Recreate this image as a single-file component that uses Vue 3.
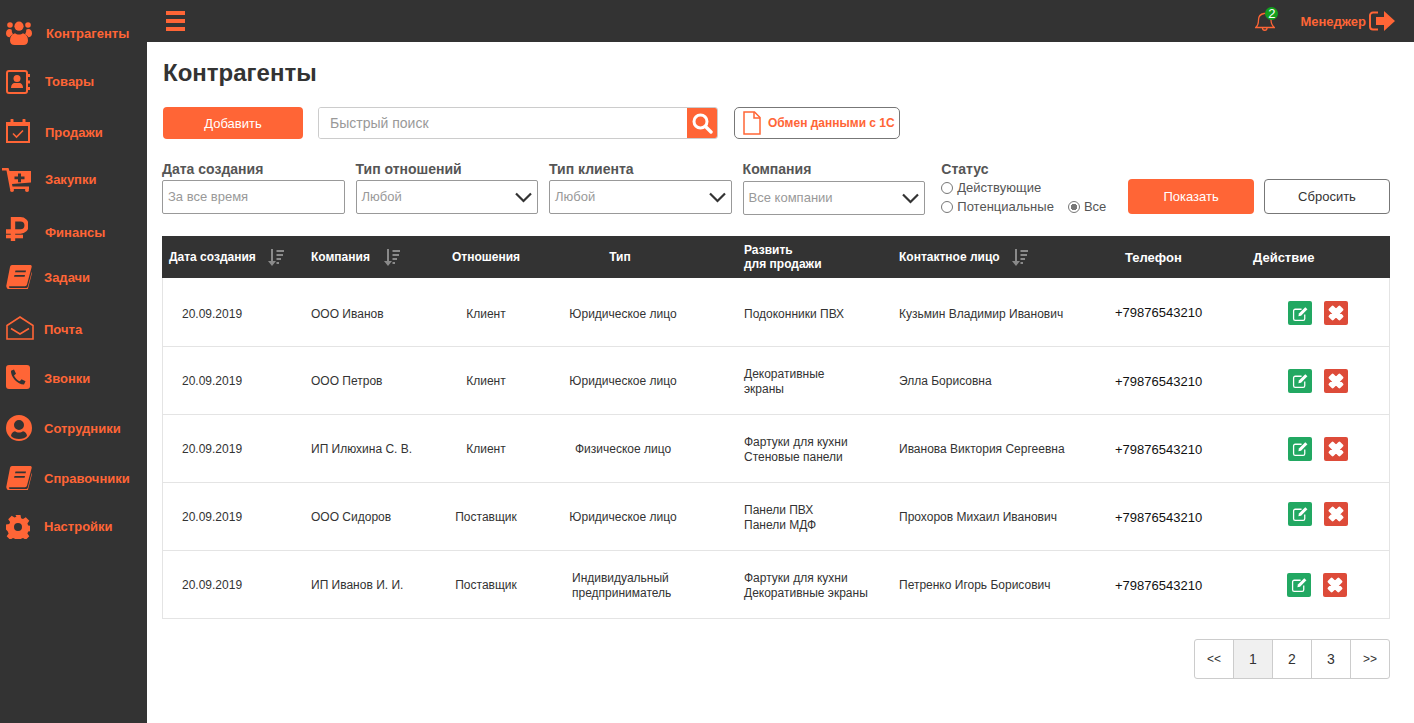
<template>
  <div class="page">
    <aside class="sidebar">
      <a v-for="item in menu" :key="item.title" class="navItem" :style="{ marginTop: item.gap + 'px' }">
        <span class="navIcon" :style="{ marginTop: item.dy * 2 + 'px' }">
          <svg v-if="item.icon === 'users'" width="26" height="24" viewBox="0 0 26 24" fill="currentColor">
            <circle cx="4" cy="4" r="2.8" /><circle cx="22" cy="4" r="2.8" /><circle cx="13" cy="5.2" r="4.6" />
            <path d="M0 12.500C0 9.500 1.500 8 3.500 8c1 0 1.800.3 2.300.8-.3 1.900.5 3.500 1.500 4.500-1.700.6-2.900 1.600-3.500 3C1.500 16 0 15 0 12.500ZM26 12.500C26 9.500 24.500 8 22.500 8c-1 0-1.800.3-2.300.8.3 1.900-.5 3.500-1.500 4.500 1.700.6 2.900 1.600 3.500 3 2.300-.3 3.800-1.300 3.800-3.800Z" />
            <path d="M4 19.500C4 15.500 6 13 9 12.200c1 .9 2.500 1.400 4 1.400s3-.5 4-1.400c3 .8 5 3.300 5 7.300 0 3-2 4.500-4.500 4.500h-9C6 24 4 22.500 4 19.500Z" />
          </svg>
          <svg v-else-if="item.icon === 'contact'" width="24" height="24" viewBox="0 0 24 24" fill="currentColor">
            <rect x="1" y="1" width="20" height="22" rx="2" fill="none" stroke="currentColor" stroke-width="2" />
            <circle cx="11" cy="8.500" r="3.500" /><path d="M5 18c0-3.500 2-5 3.500-5h5c1.500 0 3.500 1.500 3.500 5Z" />
            <rect x="21.500" y="4" width="2.500" height="3" /><rect x="21.500" y="10.500" width="2.500" height="3" /><rect x="21.500" y="17" width="2.500" height="3" />
          </svg>
          <svg v-else-if="item.icon === 'calendar'" width="24" height="24" viewBox="0 0 24 24" fill="none" stroke="currentColor">
            <path d="M1 6h22v17H1Z" stroke-width="2" />
            <path d="M0 3h24v3.500H0Z" fill="currentColor" stroke="none" />
            <path d="M6 1v3M18 1v3" stroke-width="3" stroke-linecap="round" />
            <path d="M7 14.500l3.500 3.500 6.500-6.500" stroke-width="1.600" />
          </svg>
          <svg v-else-if="item.icon === 'cart'" class="cartIcon" width="29" height="24" viewBox="0 0 29 24" fill="currentColor">
            <path d="M0 0h6.500l1 3H29v11.500l-19 1.500.5 2.500H27V21H8L4.500 2.500H0Z" />
            <circle cx="10" cy="22" r="2" /><circle cx="25" cy="22" r="2" />
            <path d="M16 5.500h3v3h3.500v2.800H19v3h-3v-3h-3.500V8.500H16Z" fill="#333" />
          </svg>
          <svg v-else-if="item.icon === 'ruble'" width="22" height="24" viewBox="0 0 22 24" fill="none" stroke="currentColor" stroke-width="4.400">
            <path d="M7 24V2.200h7.500a6 6 0 0 1 0 12.300H0" /><path d="M0 19.500h17" stroke-width="3.600" />
          </svg>
          <svg v-else-if="item.icon === 'book'" width="26" height="24" viewBox="0 0 26 24" fill="currentColor">
            <path d="M6 0h18c1.500 0 2 1 1.600 2.200L21 19.500c-.3 1.200-1 1.700-2 1.700H4c-1.500 0-1.500 1.800 0 1.800h16c.8 0 1.300-.3 1.700-1.100l4-15 .3 1-4 15.500c-.2.900-1 1.600-2 1.600H3.500C1 24 0 22 .4 20.300L4 2C4.300.8 5 0 6 0Z" />
            <path d="M9.500 5.500h10.500l-.4 1.800H9ZM8.500 10h10.500l-.4 1.800H8Z" fill="#333" />
          </svg>
          <svg v-else-if="item.icon === 'mail'" width="28" height="24" viewBox="0 0 28 24" fill="none" stroke="currentColor" stroke-width="1.600">
            <path d="M1 23V9.500L14 1l13 8.500V23Z" />
            <path d="M5 12.500l9 5.500 9-5.500" />
          </svg>
          <svg v-else-if="item.icon === 'phone'" width="24" height="24" viewBox="0 0 24 24" fill="currentColor">
            <path d="M3 0h18a3 3 0 0 1 3 3v18a3 3 0 0 1-3 3H3a3 3 0 0 1-3-3V3a3 3 0 0 1 3-3Z" />
            <path d="M8 4.500l-3 1.200c-.5 6 6.500 13.800 13 13.800l1.500-3.200-4-2-1.700 2C11.500 15.500 9 13 8 10.500l2-1.700Z" fill="#333" />
          </svg>
          <svg v-else-if="item.icon === 'user'" width="26" height="26" viewBox="0 0 26 26" fill="currentColor">
            <path fill-rule="evenodd" d="M13 0a13 13 0 1 1 0 26a13 13 0 0 1 0-26ZM13 5a5 5 0 1 0 0 10a5 5 0 0 0 0-10ZM5 21c1.500 2 4.500 3 8 3s6.500-1 8-3c-.3-3-2-4.500-4-4.800-1 .8-2.500 1.300-4 1.300s-3-.5-4-1.300c-2 .3-3.700 1.800-4 4.800Z" />
          </svg>
          <svg v-else-if="item.icon === 'gear'" width="24" height="24" viewBox="0 0 24 24" fill="currentColor">
            <path fill-rule="evenodd" d="M9.500 0h5l.6 3.300 1.900.8 2.800-1.900 3.500 3.500-1.900 2.800.8 1.900 3.300.6v5l-3.300.6-.8 1.900 1.900 2.800-3.500 3.500-2.800-1.900-1.900.8-.6 3.300h-5l-.6-3.300-1.900-.8-2.800 1.900-3.500-3.500 1.900-2.800-.8-1.900L0 14.500v-5l3.300-.6.8-1.900-1.900-2.800 3.500-3.500 2.800 1.900 1.900-.8ZM12 8a4 4 0 1 0 0 8a4 4 0 0 0 0-8Z" />
          </svg>
        </span>
        <span class="navText">{{ item.title }}</span>
      </a>
    </aside>

    <div class="main">
      <header class="topBar">
        <div class="burger"><i></i><i></i><i></i></div>
        <div class="bell">
          <svg width="20" height="21" viewBox="0 0 20 21" fill="none" stroke="currentColor" stroke-width="1.300">
            <path d="M.7 16.500c2.300-2 2.800-3.500 2.800-7.500 0-3.500 2.500-6 5.500-6.500s7 3 7 6.500c0 4 1 5.500 3.300 7.500Z" />
            <path d="M7.500 17c0 3 4.500 3 4.500 0" />
          </svg>
          <span class="badge">2</span>
        </div>
        <span class="manager">Менеджер</span>
        <svg class="exitIcon" width="26" height="20" viewBox="0 0 26 20" fill="currentColor">
          <path d="M9 1.500H4A3 3 0 0 0 1 4.500v11a3 3 0 0 0 3 3h5" fill="none" stroke="currentColor" stroke-width="2" />
          <path d="M7 6h8V0l11 10-11 10v-6H7Z" />
        </svg>
      </header>

      <div class="content">
        <h1>Контрагенты</h1>

        <div class="toolbar">
          <button class="btnOrange addBtn">Добавить</button>
          <div class="searchBox">
            <input type="text" placeholder="Быстрый поиск" />
            <span class="searchBtn">
              <svg width="22" height="22" viewBox="0 0 22 22" fill="none" stroke="#fff">
                <circle cx="9.500" cy="9.500" r="6.500" stroke-width="3" />
                <path d="M14.500 14.500l5.500 5.500" stroke-width="3.400" stroke-linecap="round" />
              </svg>
            </span>
          </div>
          <button class="exchangeBtn">
            <svg width="18" height="24" viewBox="0 0 18 24" fill="none" stroke="#ff6536" stroke-width="1.500">
              <path d="M1 1h10.500L17 6.500V23H1Z" /><path d="M11 1v6h6" />
            </svg>
            Обмен данными с 1С
          </button>
        </div>

        <div class="filters">
          <div class="field">
            <label>Дата создания</label>
            <div class="selectBox">За все время</div>
          </div>
          <div class="field">
            <label>Тип отношений</label>
            <div class="selectBox">Любой<svg class="chevron" viewBox="0 0 17 11"><path d="M1 1.500l7.500 7.500L16 1.500" /></svg></div>
          </div>
          <div class="field">
            <label>Тип клиента</label>
            <div class="selectBox">Любой<svg class="chevron" viewBox="0 0 17 11"><path d="M1 1.500l7.500 7.500L16 1.500" /></svg></div>
          </div>
          <div class="field">
            <label>Компания</label>
            <div class="selectBox company">Все компании<svg class="chevron" viewBox="0 0 17 11"><path d="M1 1.500l7.500 7.500L16 1.500" /></svg></div>
          </div>
          <div class="statusField">
            <label>Статус</label>
            <div class="radioLine"><span class="radio"></span>Действующие</div>
            <div class="radioLine"><span class="radio"></span>Потенциальные<span class="radio checked allRadio"></span>Все</div>
          </div>
          <button class="btnOrange showBtn">Показать</button>
          <button class="resetBtn">Сбросить</button>
        </div>

        <div class="tableWrap">
          <div class="row headRow">
            <div class="cDate">Дата создания<svg class="sortIcon" viewBox="0 0 16 17"><path d="M3 0h2v12h3l-4 5-4-5h3Z" /><path d="M8.500 1H16v2H8.500ZM8.500 5H15v2H8.500ZM8.500 9H13v2H8.500ZM8.500 13H11v2H8.500Z" /></svg></div>
            <div>Компания<svg class="sortIcon companySort" viewBox="0 0 16 17"><path d="M3 0h2v12h3l-4 5-4-5h3Z" /><path d="M8.500 1H16v2H8.500ZM8.500 5H15v2H8.500ZM8.500 9H13v2H8.500ZM8.500 13H11v2H8.500Z" /></svg></div>
            <div class="center">Отношения</div>
            <div class="center typeHead">Тип</div>
            <div>Развить<br />для продажи</div>
            <div>Контактное лицо<svg class="sortIcon" viewBox="0 0 16 17"><path d="M3 0h2v12h3l-4 5-4-5h3Z" /><path d="M8.500 1H16v2H8.500ZM8.500 5H15v2H8.500ZM8.500 9H13v2H8.500ZM8.500 13H11v2H8.500Z" /></svg></div>
            <div class="cPhoneHead">Телефон</div>
            <div class="cActionHead">Действие</div>
          </div>
          <div v-for="(r, i) in rows" :key="i" class="row bodyRow">
            <div class="bodyDate">{{ r.date }}</div>
            <div>{{ r.company }}</div>
            <div class="center">{{ r.relation }}</div>
            <div v-if="r.type2" class="cTypeLong">{{ r.type }}<br />{{ r.type2 }}</div>
            <div v-else class="center cType">{{ r.type }}</div>
            <div>{{ r.goods }}<template v-if="r.goods2"><br />{{ r.goods2 }}</template></div>
            <div>{{ r.person }}</div>
            <div class="cPhone">+79876543210</div>
            <div class="cActions">
              <span class="iconBtn green">
                <svg width="17" height="17" viewBox="0 0 16 16" fill="none" stroke="#fff" stroke-width="1.200">
                  <path d="M12 9v4a1.500 1.500 0 0 1-1.500 1.500h-7.500A1.500 1.500 0 0 1 1.500 13V5.500A1.500 1.500 0 0 1 3 4h6" />
                  <path d="M6 10.500l.5-2.500 6-6 2 2-6 6Z" fill="#fff" stroke="none" />
                </svg>
              </span>
              <span class="iconBtn red">
                <svg width="18" height="18" viewBox="0 0 16 16"><path d="M2.500 5L5 2.500l3 3 3-3L13.500 5l-3 3 3 3-2.500 2.500-3-3-3 3L2.500 11l3-3Z" fill="#fff" stroke="#fff" stroke-width="2.200" stroke-linejoin="round" /></svg>
              </span>
            </div>
          </div>
        </div>

        <div class="pagerLine">
          <div class="pager">
            <span class="arrows">&lt;&lt;</span><span class="active">1</span><span>2</span><span>3</span><span class="arrows">&gt;&gt;</span>
          </div>
        </div>
      </div>
    </div>
  </div>
</template>

<script setup>
const menu = [
  { title: 'Контрагенты', icon: 'users', gap: 0, dy: 0 },
  { title: 'Товары', icon: 'contact', gap: 8, dy: 1 },
  { title: 'Продажи', icon: 'calendar', gap: 11, dy: -1 },
  { title: 'Закупки', icon: 'cart', gap: 7, dy: 1 },
  { title: 'Финансы', icon: 'ruble', gap: 13, dy: -3 },
  { title: 'Задачи', icon: 'book', gap: 5, dy: 0 },
  { title: 'Почта', icon: 'mail', gap: 12, dy: -1 },
  { title: 'Звонки', icon: 'phone', gap: 9, dy: -1 },
  { title: 'Сотрудники', icon: 'user', gap: 10, dy: 0 },
  { title: 'Справочники', icon: 'book', gap: 10, dy: 0 },
  { title: 'Настройки', icon: 'gear', gap: 8, dy: 1 }
]

const rows = [
  { date: '20.09.2019', company: 'ООО Иванов', relation: 'Клиент', type: 'Юридическое лицо', goods: 'Подоконники ПВХ', person: 'Кузьмин Владимир Иванович' },
  { date: '20.09.2019', company: 'ООО Петров', relation: 'Клиент', type: 'Юридическое лицо', goods: 'Декоративные', goods2: 'экраны', person: 'Элла Борисовна' },
  { date: '20.09.2019', company: 'ИП Илюхина С. В.', relation: 'Клиент', type: 'Физическое лицо', goods: 'Фартуки для кухни', goods2: 'Стеновые панели', person: 'Иванова Виктория Сергеевна' },
  { date: '20.09.2019', company: 'ООО Сидоров', relation: 'Поставщик', type: 'Юридическое лицо', goods: 'Панели ПВХ', goods2: 'Панели МДФ', person: 'Прохоров Михаил Иванович' },
  { date: '20.09.2019', company: 'ИП Иванов И. И.', relation: 'Поставщик', type: 'Индивидуальный', type2: 'предприниматель', goods: 'Фартуки для кухни', goods2: 'Декоративные экраны', person: 'Петренко Игорь Борисович' }
]
</script>

<style>
html, body {
  margin: 0;
  background: #fff;
}
</style>

<style scoped>
.page {
  display: flex;
  min-height: 100vh;
  font-family: 'Liberation Sans', Arial, sans-serif;
  color: #333;
}

.sidebar {
  width: 147px;
  flex-shrink: 0;
  background: #333;
  padding-top: 13px;
  box-sizing: border-box;
}

.navItem {
  display: flex;
  align-items: center;
  height: 40px;
  color: #ff6536;
  font-size: 13px;
  font-weight: bold;
}

.navItem:first-child .navText {
  margin-left: 1px;
}

.navIcon {
  width: 45px;
  padding-left: 6px;
  box-sizing: border-box;
  flex-shrink: 0;
  display: flex;
}

.navItem:nth-child(n+6) .navIcon {
  width: 44px;
}

.cartIcon {
  margin-left: -4px;
}

.topBar {
  height: 42px;
  background: #333;
  display: flex;
  align-items: center;
  color: #ff6536;
  padding: 0 19px;
}

.burger {
  display: flex;
  flex-direction: column;
  gap: 4px;
  margin-right: auto;
}

.burger i {
  display: block;
  width: 19px;
  height: 4px;
  background: #ff6536;
}

.bell {
  position: relative;
  width: 20px;
  height: 21px;
  margin-right: 25px;
}

.badge {
  position: absolute;
  left: 10px;
  top: -4px;
  width: 13px;
  height: 13px;
  border-radius: 50%;
  background: #14a01e;
  color: #fff;
  font-size: 13px;
  line-height: 13px;
  text-align: center;
}

.manager {
  font-size: 13px;
  font-weight: bold;
  margin-right: 3px;
}

.main {
  flex: 1;
  min-width: 0;
}

.content {
  padding: 0 24px 0 15px;
}

h1 {
  font-size: 24px;
  font-weight: bold;
  line-height: 28px;
  margin: 17px 0 20px 1px;
  color: #333;
}

.toolbar {
  display: flex;
  align-items: center;
  margin-left: 1px;
}

.btnOrange {
  border: none;
  background: #ff6536;
  color: #fff;
  border-radius: 4px;
  font-family: inherit;
  font-size: 13px;
}

.addBtn {
  width: 140px;
  height: 32px;
}

.searchBox {
  display: flex;
  width: 400px;
  height: 32px;
  margin-left: 15px;
  border: 1px solid #ccc;
  border-radius: 3px;
  box-sizing: border-box;
  overflow: hidden;
}

.searchBox input {
  flex: 1;
  min-width: 0;
  border: none;
  outline: none;
  padding: 0 11px;
  font-family: inherit;
  font-size: 14px;
}

.searchBox input::placeholder {
  color: #999;
}

.searchBtn {
  width: 30px;
  background: #ff6536;
  display: flex;
  align-items: center;
  justify-content: center;
}

.exchangeBtn {
  display: flex;
  align-items: center;
  gap: 7px;
  width: 166px;
  height: 32px;
  margin-left: 16px;
  padding: 0 0 0 8px;
  background: #fff;
  border: 1px solid #777;
  border-radius: 5px;
  box-sizing: border-box;
  color: #ff6536;
  font-family: inherit;
  font-size: 12px;
  font-weight: bold;
  white-space: nowrap;
}

.filters {
  display: flex;
  align-items: flex-end;
  margin-top: 19px;
}

.field {
  width: 183px;
  margin-right: 10.7px;
}

.field label {
  display: block;
  font-size: 14px;
  font-weight: bold;
  color: #555;
  line-height: 22px;
}

.statusField label {
  display: block;
  font-size: 14px;
  font-weight: bold;
  color: #555;
  line-height: 18px;
}

.selectBox {
  position: relative;
  height: 34px;
  border: 1px solid #999;
  border-radius: 2px;
  box-sizing: border-box;
  padding-left: 5px;
  line-height: 32px;
  font-size: 13px;
  color: #999;
}

.selectBox.company {
  margin-top: 1px;
  margin-bottom: -1px;
}

.chevron {
  position: absolute;
  right: 5px;
  top: 11px;
  width: 17px;
  height: 11px;
  fill: none;
  stroke: #333;
  stroke-width: 2.200;
}

.statusField {
  width: 187px;
  margin-left: 5.2px;
  margin-bottom: -2px;
  font-size: 13px;
  color: #555;
}

.radioLine {
  display: flex;
  align-items: center;
  height: 19px;
}

.radio {
  width: 12px;
  height: 12px;
  border: 1px solid #777;
  border-radius: 50%;
  box-sizing: border-box;
  margin-right: 4px;
  background: #fff;
  flex-shrink: 0;
}

.radio.checked {
  background: radial-gradient(circle, #777 0 3px, #fff 3.500px);
}

.allRadio {
  margin-left: 14px;
}

.showBtn,
.resetBtn {
  width: 126px;
  height: 35px;
  font-size: 13px;
  border-radius: 4px;
}

.resetBtn {
  margin-left: 10px;
  background: #fff;
  border: 1px solid #777;
  color: #333;
  font-family: inherit;
}

.tableWrap {
  margin-top: 22px;
}

.row {
  display: grid;
  grid-template-columns: 149px 120px 110px 203px 155px 216px 125px 150px;
  align-items: center;
  box-sizing: border-box;
}

.headRow {
  height: 42px;
  background: #333;
  color: #fff;
  font-size: 12px;
  font-weight: bold;
}

.bodyRow {
  height: 68px;
  padding-top: 2px;
  grid-template-columns: 148px 120px 110px 203px 155px 216px 125px 150px;
  border: 1px solid #e4e4e4;
  border-top: none;
  font-size: 12px;
  color: #333;
  line-height: 15px;
}

.bodyRow:nth-child(2) {
  height: 69px;
  padding-top: 4px;
}

.cDate {
  padding-left: 7px;
}

.bodyDate {
  padding-left: 19px;
}

.center {
  text-align: center;
}

.cType {
  padding-right: 39px;
}

.typeHead {
  padding-right: 45px;
}

.cTypeLong {
  padding-left: 31px;
}

.sortIcon {
  width: 16px;
  height: 17px;
  fill: #8a8a8a;
  margin-left: 12px;
  vertical-align: middle;
}

.companySort {
  margin-left: 14px;
}

.cPhoneHead {
  padding-left: 10px;
  font-size: 13px;
}

.cActionHead {
  padding-left: 13px;
  font-size: 13px;
}

.cPhone {
  font-size: 13px;
  color: #111;
}

.bodyRow:nth-child(2) .cPhone {
  margin-top: -4px;
}

.cActions {
  display: flex;
  gap: 12px;
  padding-left: 48px;
  margin-top: -2px;
}

.bodyRow:nth-child(5) .cActions {
  margin-top: -8px;
}

.bodyRow:last-child .cActions {
  padding-left: 47px;
}

.iconBtn {
  width: 24px;
  height: 24px;
  border-radius: 2px;
  display: flex;
  align-items: center;
  justify-content: center;
}

.green {
  background: #22a862;
}

.red {
  background: #dd4b39;
}

.pagerLine {
  display: flex;
  justify-content: flex-end;
  margin-top: 20px;
}

.pager {
  display: flex;
  border: 1px solid #ccc;
  border-radius: 3px;
  height: 40px;
  box-sizing: border-box;
  font-size: 14px;
}

.pager span {
  width: 38px;
  display: flex;
  align-items: center;
  justify-content: center;
  border-left: 1px solid #ccc;
  color: #333;
}

.pager span:first-child {
  border-left: none;
}

.pager .arrows {
  font-size: 12px;
}

.pager .active {
  background: #f0f0f0;
}
</style>
